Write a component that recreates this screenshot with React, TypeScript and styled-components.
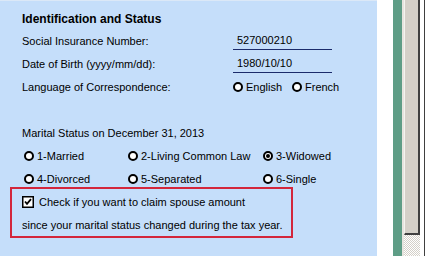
import * as React from 'react';
import styled, { createGlobalStyle } from 'styled-components';

const GlobalStyle = createGlobalStyle`
    html, body {
        margin: 0;
        padding: 0;
        background: #ffffff;
        overflow: hidden;
    }
    body {
        font-family: Tahoma, "Liberation Sans", Arial, sans-serif;
    }
`;

const Screen = styled.div`
    display: flex;
    width: 428px;
    height: 256px;
`;

const Panel = styled.section`
    flex: 0 0 377px;
    box-sizing: border-box;
    background: #c5defa;
    border-top: 1px solid #dbe8f7;
    padding: 5px 0 0 22px;
    font-size: 11px;
    color: #000;
`;

const Title = styled.h2`
    margin: 0;
    height: 23px;
    line-height: 27px;
    overflow: hidden;
    font-size: 12px;
    font-weight: bold;
`;

const Row = styled.div<{ $indent?: number }>`
    display: flex;
    align-items: center;
    height: 23px;
    padding-left: ${p => p.$indent || 0}px;
`;

const Label = styled.span`
    flex: 0 0 211px;
`;

const Field = styled.span`
    box-sizing: border-box;
    width: 99px;
    height: 18px;
    line-height: 17px;
    padding-left: 4px;
    border-bottom: 1px solid #1b2b6b;
`;

const Spacer = styled.div`
    height: 23px;
`;

const Option = styled.label<{ $width: number }>`
    display: flex;
    align-items: center;
    gap: 3px;
    flex: 0 0 ${p => p.$width}px;
`;

const RadioRing = styled.span<{ $checked?: boolean }>`
    box-sizing: border-box;
    width: 10px;
    height: 10px;
    border: 2px solid #000;
    border-radius: 50%;
    background: #fff;
    display: flex;
    align-items: center;
    justify-content: center;
    &::after {
        content: '';
        display: ${p => (p.$checked ? 'block' : 'none')};
        width: 4px;
        height: 4px;
        border-radius: 50%;
        background: #000;
    }
`;

const ClaimBox = styled.div`
    margin: -3px 0 0 -12px;
    width: 283px;
    box-sizing: border-box;
    border: 2px solid #d3263b;
    padding: 1px 0 0 10px;
`;

const CheckRow = styled.label`
    display: flex;
    align-items: center;
    gap: 5px;
    height: 23px;
`;

const Gutter = styled.div`
    flex: 0 0 16px;
    background: #ffffff;
`;

const GreenBar = styled.div`
    flex: 0 0 9px;
    background: #5e9d86;
    border-right: 2px solid #e6e4de;
`;

const Scroll = styled.div`
    flex: 0 0 16px;
    display: flex;
    flex-direction: column;
`;

const Thumb = styled.div`
    flex: 0 0 235px;
    box-sizing: border-box;
    background: #d4d0c8;
    border-right: 2px solid #404040;
    border-bottom: 2px solid #404040;
    border-left: 1px solid #f4f3ef;
`;

const Track = styled.div`
    flex: 1;
    background-color: #ffffff;
    background-image: repeating-conic-gradient(#d4d0c8 0% 25%, #ffffff 0% 50%);
    background-size: 2px 2px;
`;

const Edge = styled.div`
    flex: 1;
    background: #ffffff;
    border-left: 4px solid #ffffff;
    display: flex;
    &::before {
        content: '';
        width: 1px;
        background: #404040;
    }
`;

interface RadioProps {
    readonly label: string;
    readonly width: number;
    readonly checked?: boolean;
}

const Radio = ({ label, width, checked }: RadioProps) => (
    <Option $width={width}>
        <RadioRing $checked={checked} />
        <span>{label}</span>
    </Option>
);

const CheckMark = () => (
    <svg width="12" height="12" viewBox="0 0 12 12">
        <rect x="0.75" y="0.75" width="10.5" height="10.5" fill="#fff" stroke="#000" strokeWidth="1.5" />
        <path d="M3 5.5 L5 7.8 L9 3.2" fill="none" stroke="#000" strokeWidth="1.8" />
    </svg>
);

export default function App() {
    return (
        <Screen>
            <GlobalStyle />
            <Panel>
                <Title>Identification and Status</Title>
                <Row>
                    <Label>Social Insurance Number:</Label>
                    <Field>527000210</Field>
                </Row>
                <Row>
                    <Label>Date of Birth (yyyy/mm/dd):</Label>
                    <Field>1980/10/10</Field>
                </Row>
                <Row>
                    <Label>Language of Correspondence:</Label>
                    <Radio label="English" width={59} />
                    <Radio label="French" width={60} />
                </Row>
                <Spacer />
                <Row>Marital Status on December 31, 2013</Row>
                <Row $indent={2}>
                    <Radio label="1-Married" width={104} />
                    <Radio label="2-Living Common Law" width={135} />
                    <Radio label="3-Widowed" width={90} checked />
                </Row>
                <Row $indent={2}>
                    <Radio label="4-Divorced" width={104} />
                    <Radio label="5-Separated" width={135} />
                    <Radio label="6-Single" width={90} />
                </Row>
                <ClaimBox>
                    <CheckRow>
                        <CheckMark />
                        <span>Check if you want to claim spouse amount</span>
                    </CheckRow>
                    <Row>since your marital status changed during the tax year.</Row>
                </ClaimBox>
            </Panel>
            <Gutter />
            <GreenBar />
            <Scroll>
                <Thumb />
                <Track />
            </Scroll>
            <Edge />
        </Screen>
    );
}
